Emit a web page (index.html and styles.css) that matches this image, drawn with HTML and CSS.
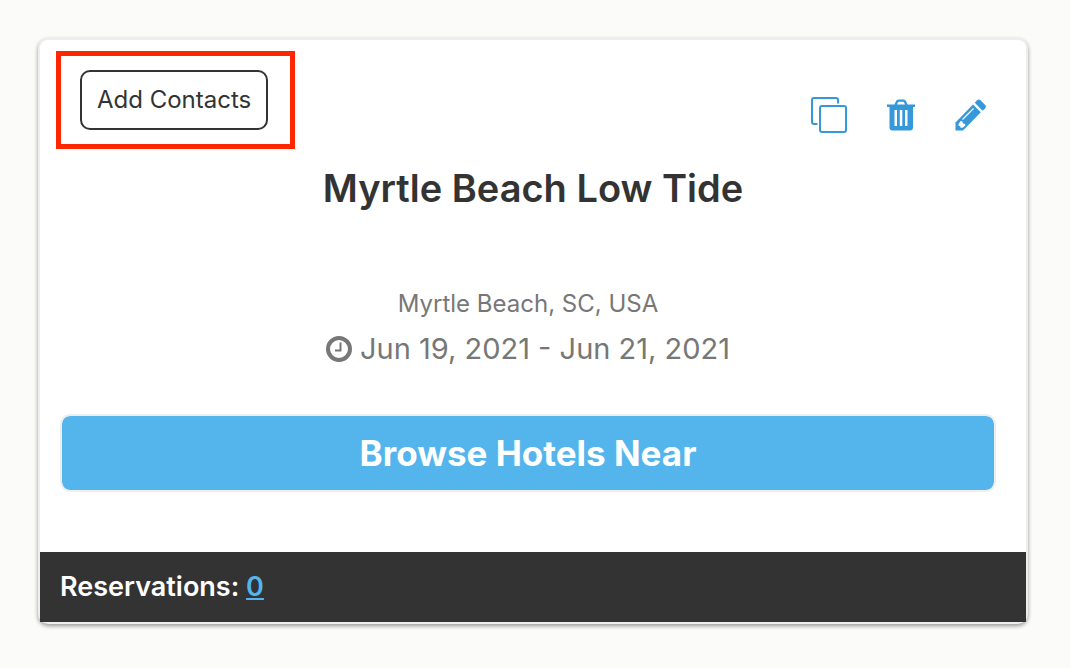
FILE: index.html
```html
<!DOCTYPE html>
<html lang="en">
<head>
    <meta charset="UTF-8">
    <meta name="viewport" content="width=device-width, initial-scale=1.0">
    <title>Myrtle Beach Low Tide</title>
    <link rel="stylesheet" href="styles.css">
</head>
<body>
    <div class="card">
        <div class="toolbar">
            <div class="highlight">
                <button type="button" class="add-contacts">Add Contacts</button>
            </div>
            <div class="actions">
                <button type="button" class="icon-button" aria-label="Copy">
                    <svg width="36" height="36" viewBox="0 0 36 36" fill="none" stroke="currentColor" stroke-width="2">
                        <rect x="9" y="9" width="26" height="26" rx="2"/>
                        <path d="M27 6.500V3a2 2 0 0 0-2-2H3a2 2 0 0 0-2 2v22a2 2 0 0 0 2 2h3.500"/>
                    </svg>
                </button>
                <button type="button" class="icon-button" aria-label="Delete">
                    <svg width="28" height="32" viewBox="0 0 28 32" fill="currentColor">
                        <path fill-rule="evenodd" d="M0 5.500h7.500L9 2Q9.700 0.500 11.500 0.500h5Q18.300 0.500 19 2l1.500 3.500H28v2.500h-2v20.500q0 3-3 3H5.500q-3 0-3-3V8H0zM10 5.500h8l-1-2.300q-.2-.4-.8-.4h-4.400q-.6 0-.8.4zM7.500 11v16H10V11zM12.800 11v16h2.500V11zM18 11v16h2.500V11z"/>
                    </svg>
                </button>
                <button type="button" class="icon-button" aria-label="Edit">
                    <svg width="32" height="32" viewBox="0 0 32 32" fill="currentColor">
                        <path d="M18 5.500l7.800 7.800L8 31.500H.5V23.500z"/>
                        <path d="M19.800 3.700l2.400-2.400q1.600-1.400 3.200 0l4.800 4.800q1.400 1.600 0 3.200l-2.600 2.400z"/>
                        <path fill="#fff" d="M3.500 25l2.200-3 1.800.4.400 2 2 .4.500 1.800-2.900 2.200H5.500l-.2-1.600-1.800-.4z"/>
                        <path fill="none" stroke="#fff" stroke-width="1.200" d="M7.500 20.500L18.500 9.500"/>
                    </svg>
                </button>
            </div>
        </div>

        <h1 class="title">Myrtle Beach Low Tide</h1>

        <div class="details">
            <p class="location">Myrtle Beach, SC, USA</p>
            <p class="dates">
                <svg class="clock" width="26" height="26" viewBox="0 0 26 26" fill="none" stroke="currentColor" aria-hidden="true">
                    <circle cx="13" cy="13" r="11" stroke-width="4"/>
                    <path stroke-width="2" d="M14.500 6.500v8H9"/>
                </svg>
                <span>Jun 19, 2021 - Jun 21, 2021</span>
            </p>
            <button type="button" class="browse">Browse Hotels Near</button>
        </div>

        <div class="footer">
            Reservations: <a href="#">0</a>
        </div>
    </div>
</body>
</html>
```
FILE: styles.css
```css
body {
    margin: 0;
    padding: 38px 42px 38px 38px;
    background: #fbfbf9;
    color: #333;
    font-family: Inter, "Liberation Sans", sans-serif;
}

button {
    font-family: inherit;
    cursor: pointer;
}

.card {
    background: #fff;
    border: 2px solid #eee;
    border-radius: 10px;
    box-shadow: 0 2px 4px rgba(0, 0, 0, 0.4);
}

.toolbar {
    display: flex;
    justify-content: space-between;
    align-items: flex-start;
    padding: 11px 39px 0 16px;
}

.highlight {
    border: 5px solid #ff2600;
    padding: 14px 22px 14px 19px;
}

.add-contacts {
    display: block;
    height: 60px;
    padding: 0 15px 2px;
    background: #fff;
    color: #333;
    border: 2px solid #333;
    border-radius: 10px;
    font-size: 24px;
}

.actions {
    display: flex;
    align-items: center;
    gap: 40px;
    padding-top: 46px;
}

.icon-button {
    display: block;
    padding: 0;
    background: none;
    border: none;
    color: #3498db;
}

.icon-button svg {
    display: block;
}

.title {
    margin: 15px 0 0;
    font-size: 38px;
    font-weight: 600;
    line-height: 48px;
    text-align: center;
}

.details {
    padding: 72px 30px 60px 20px;
    text-align: center;
    color: #777;
}

.location {
    margin: 0;
    font-size: 24px;
    line-height: 40px;
}

.dates {
    display: flex;
    justify-content: center;
    align-items: center;
    gap: 8px;
    margin: 0 0 40px;
    font-size: 29px;
    line-height: 50px;
}

.browse {
    display: block;
    width: 100%;
    height: 78px;
    padding: 0;
    background: #54b5ed;
    background-clip: padding-box;
    color: #fff;
    border: 2px solid #eee;
    border-radius: 10px;
    font-size: 35px;
    font-weight: 700;
}

.footer {
    padding: 0 20px;
    background: #333;
    color: #fff;
    font-size: 27px;
    font-weight: 600;
    line-height: 70px;
}

.footer a {
    color: #54b5ed;
}
```
